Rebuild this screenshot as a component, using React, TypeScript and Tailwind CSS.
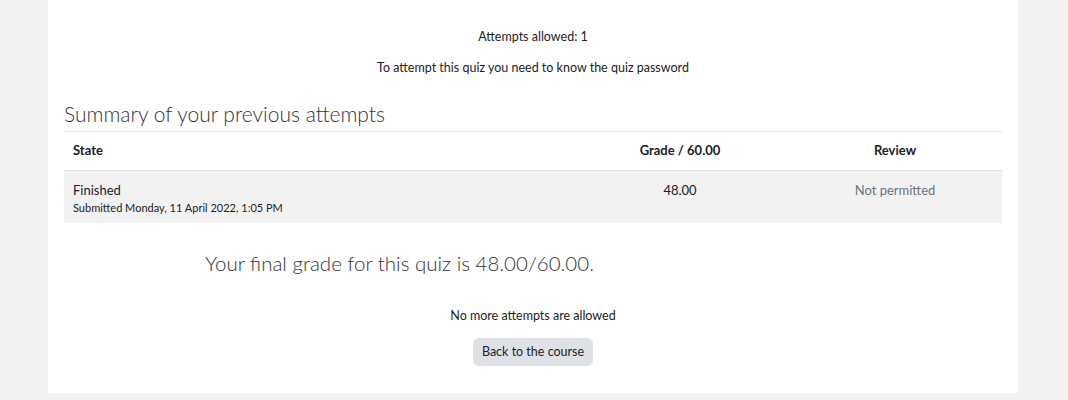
import React from "react";

const font = { fontFamily: "Lato, 'Noto Sans', sans-serif" };

const App = () => {
  return (
    <div className="min-h-[400px] bg-[#f2f2f2] px-[48px] text-[#1d2125]" style={font}>
      <div className="w-[970px] bg-white px-4 pb-[27px]">
        <div className="flex flex-col items-center pt-[27px] text-[12.5px]">
          <p className="leading-[20px]">Attempts allowed: 1</p>
          <p className="mt-[11px] leading-[20px]">
            To attempt this quiz you need to know the quiz password
          </p>
        </div>

        <h3 className="mt-[22px] border-b border-[#e6e6e6] pb-[3px] text-[21px] font-light leading-[28px] text-[#333]">
          Summary of your previous attempts
        </h3>

        <table className="w-full text-[13px]">
          <thead>
            <tr className="border-b border-[#dee2e6]">
              <th className="h-[38px] px-[9px] text-left font-bold">State</th>
              <th className="w-[216px] text-center font-bold">Grade / 60.00</th>
              <th className="w-[214px] text-center font-bold">Review</th>
            </tr>
          </thead>
          <tbody>
            <tr className="bg-[#f2f2f2] align-top">
              <td className="h-[53px] px-[9px] pt-[10px]">
                <div className="leading-[18px]">Finished</div>
                <div className="text-[11px] leading-[18px]">
                  Submitted Monday, 11 April 2022, 1:05 PM
                </div>
              </td>
              <td className="pt-[10px] text-center leading-[18px]">48.00</td>
              <td className="pt-[10px] text-center leading-[18px] text-[#6a737b]">
                Not permitted
              </td>
            </tr>
          </tbody>
        </table>

        <h3 className="mt-[24px] pl-[141px] text-[20.5px] font-light leading-[32px] text-[#333]">
          Your final grade for this quiz is 48.00/60.00.
        </h3>

        <div className="mt-[27px] flex flex-col items-center text-[12.5px]">
          <p className="leading-[20px]">No more attempts are allowed</p>
          <button className="mt-[12px] h-[28px] rounded-[6px] bg-[#dee2e6] px-[9px] text-[12.5px] text-[#1d2125]">
            Back to the course
          </button>
        </div>
      </div>
    </div>
  );
};

export default App;
